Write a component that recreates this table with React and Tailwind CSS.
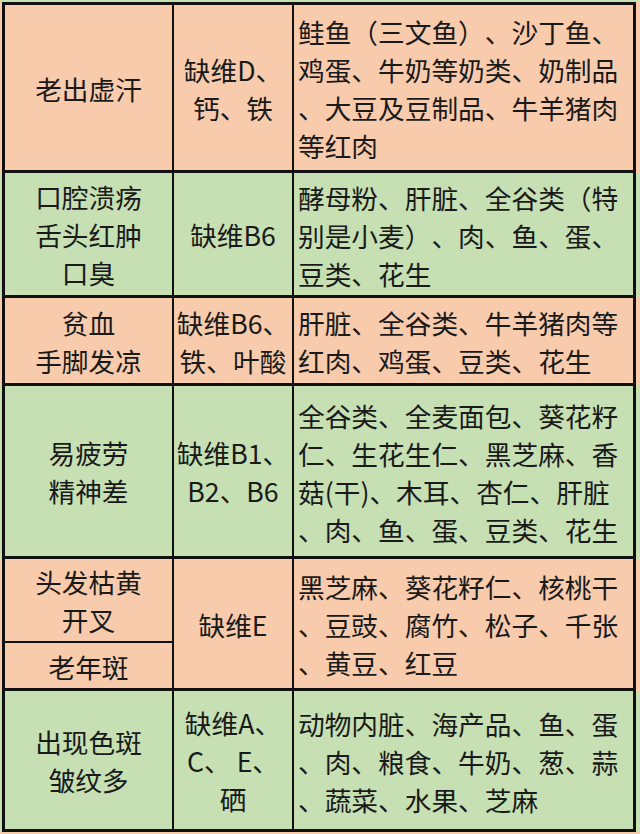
const PEACH = "bg-[#f8cbad]";
const GREEN = "bg-[#c6e0b4]";

const rows = [
  {
    bg: PEACH,
    h: "h-[165px]",
    c1: [{ h: "flex-1", lines: ["老出虚汗"] }],
    c2: ["缺维D、", "钙、铁"],
    c3: ["鲑鱼（三文鱼）、沙丁鱼、", "鸡蛋、牛奶等奶类、奶制品", "、大豆及豆制品、牛羊猪肉", "等红肉"],
  },
  {
    bg: GREEN,
    h: "h-[122px]",
    c1: [{ h: "flex-1", lines: ["口腔溃疡", "舌头红肿", "口臭"] }],
    c2: ["缺维B6"],
    c3: ["酵母粉、肝脏、全谷类（特", "别是小麦）、肉、鱼、蛋、", "豆类、花生"],
  },
  {
    bg: PEACH,
    h: "h-[85px]",
    c1: [{ h: "flex-1", lines: ["贫血", "手脚发凉"] }],
    c2: ["缺维B6、", "铁、叶酸"],
    c3: ["肝脏、全谷类、牛羊猪肉等", "红肉、鸡蛋、豆类、花生"],
  },
  {
    bg: GREEN,
    h: "h-[170px]",
    c1: [{ h: "flex-1", lines: ["易疲劳", "精神差"] }],
    c2: ["缺维B1、", "B2、B6"],
    c3: ["全谷类、全麦面包、葵花籽", "仁、生花生仁、黑芝麻、香", "菇(干)、木耳、杏仁、肝脏", "、肉、鱼、蛋、豆类、花生"],
  },
  {
    bg: PEACH,
    h: "h-[129px]",
    c1: [
      { h: "h-[82px]", lines: ["头发枯黄", "开叉"] },
      { h: "flex-1", lines: ["老年斑"] },
    ],
    c2: ["缺维E"],
    c3: ["黑芝麻、葵花籽仁、核桃干", "、豆豉、腐竹、松子、千张", "、黄豆、红豆"],
  },
  {
    bg: GREEN,
    h: "h-[138px]",
    c1: [{ h: "flex-1", lines: ["出现色斑", "皱纹多"] }],
    c2: ["缺维A、", "C、 E、", "硒"],
    c3: ["动物内脏、海产品、鱼、蛋", "、肉、粮食、牛奶、葱、蒜", "、蔬菜、水果、芝麻"],
  },
];

const Lines = ({ lines, align }) => (
  <div className={align}>
    {lines.map((l, i) => (
      <div key={i} className="whitespace-nowrap">
        {l}
      </div>
    ))}
  </div>
);

export default function App() {
  return (
    <div
      className="w-[640px] h-[834px] overflow-hidden bg-[#f8cbad] text-[26.7px] leading-[38px] text-[#1a1a1a] [text-spacing-trim:space-all]"
      style={{ fontFamily: '"Noto Sans CJK SC", "Noto Sans", sans-serif' }}
    >
      <div className={`h-[2px] ${GREEN}`} />
      {rows.map((r, i) => (
        <div key={i} className={`flex ${r.bg}`}>
          <div className="w-[2px] shrink-0" />
          <div
            className={`flex w-[634px] shrink-0 border-x-[3px] border-b-[3px] border-[#111] ${
              i === 0 ? "border-t-[3px]" : ""
            }`}
          >
            <div className={`flex flex-col w-[167px] shrink-0 ${r.h}`}>
              {r.c1.map((b, j) => (
                <div
                  key={j}
                  className={`${b.h} flex items-center justify-center pt-[2px] ${
                    j > 0 ? "border-t-2 border-[#111]" : ""
                  }`}
                >
                  <Lines lines={b.lines} align="text-center" />
                </div>
              ))}
            </div>
            <div className="w-[2px] shrink-0 bg-[#111]" />
            <div className="w-[118px] shrink-0 flex items-center justify-center pt-[2px]">
              <Lines lines={r.c2} align="text-center" />
            </div>
            <div className="w-[2px] shrink-0 bg-[#111]" />
            <div className="flex-1 flex items-center pl-[4px] pt-[3px]">
              <Lines lines={r.c3} align="text-left" />
            </div>
          </div>
          <div className="flex-1" />
        </div>
      ))}
    </div>
  );
}
